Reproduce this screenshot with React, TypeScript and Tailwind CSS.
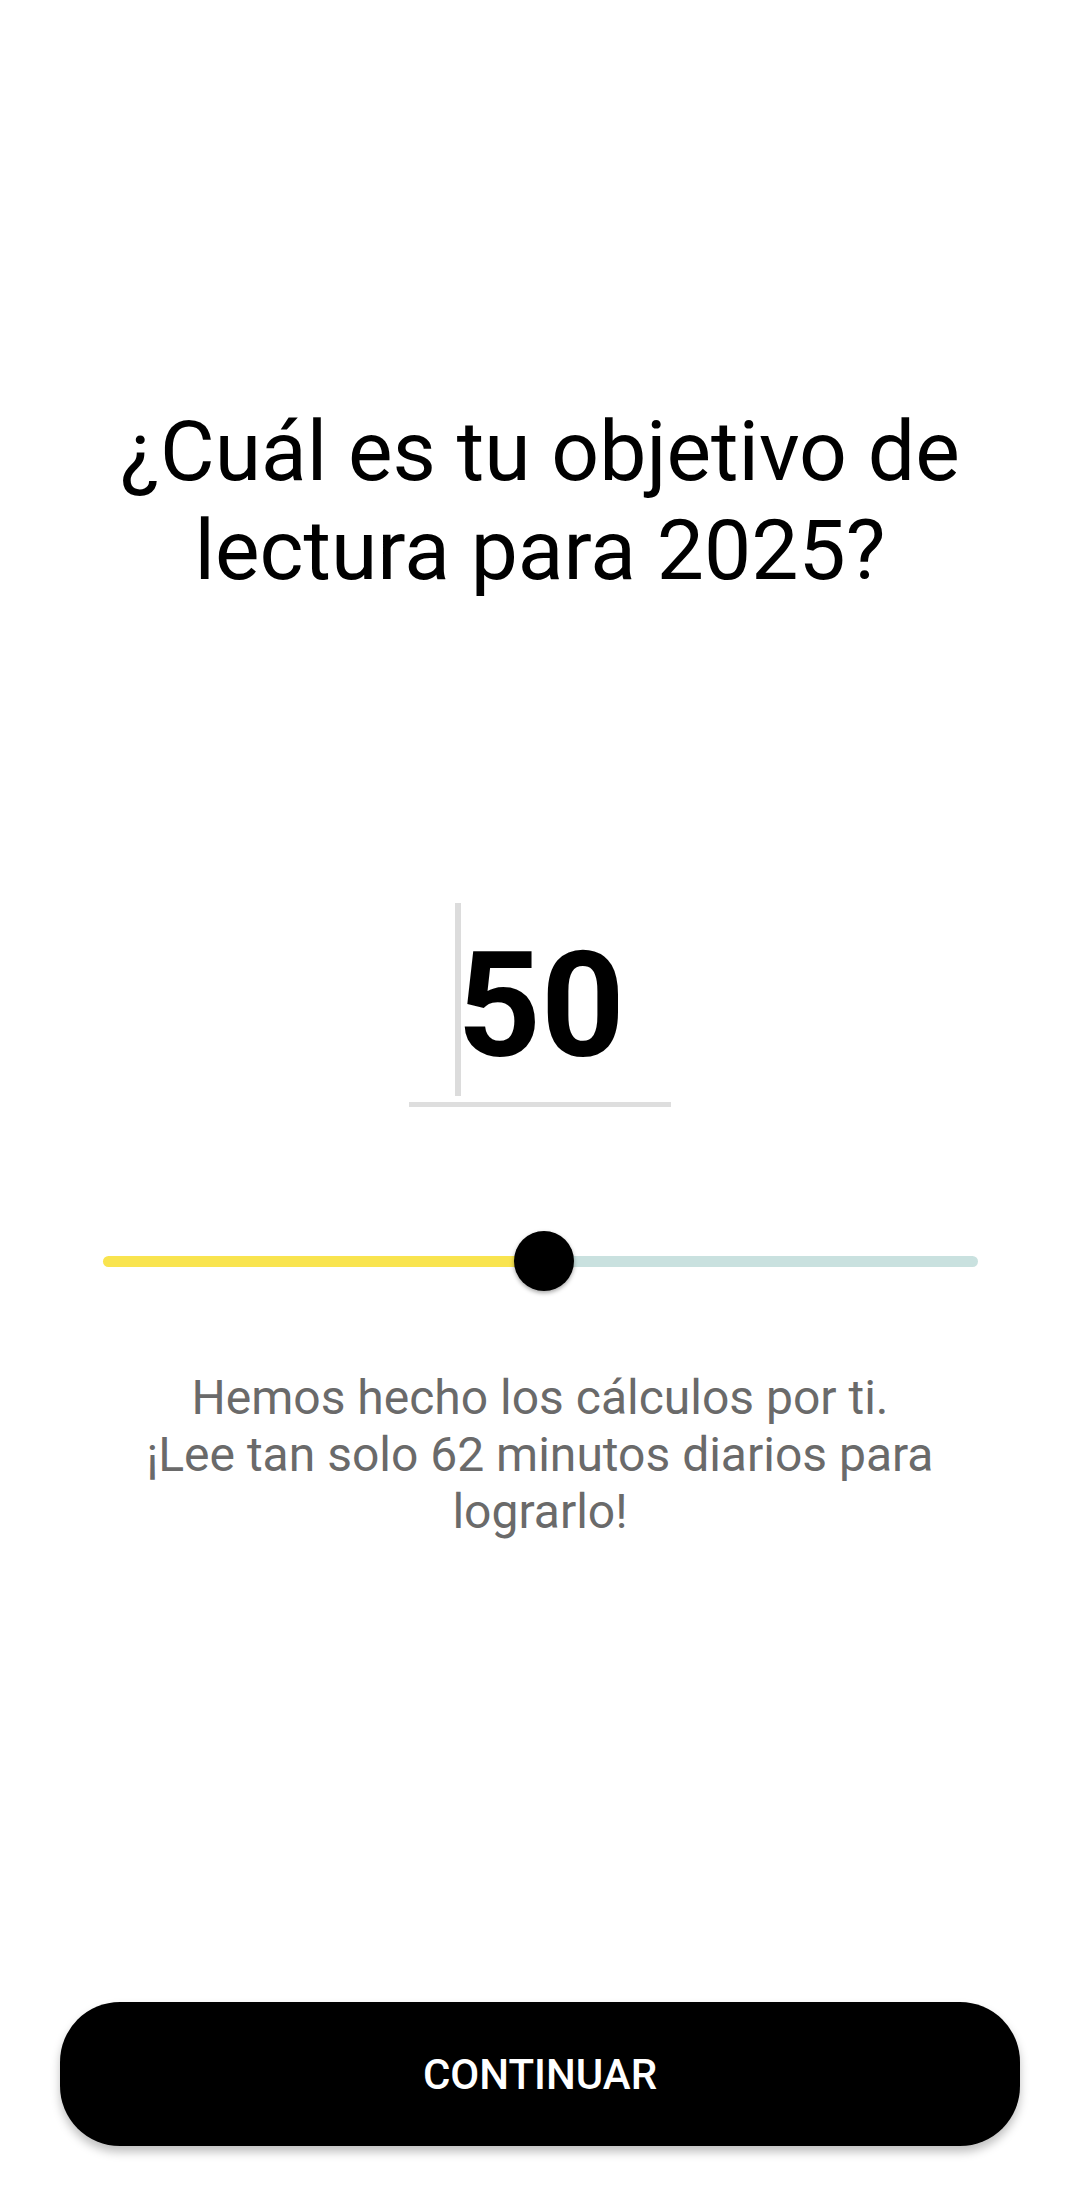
export default function App() {
  const value = 50;
  const percent = 50.5;

  return (
    <div className="flex min-h-[2206px] w-full flex-col items-center bg-white font-['Roboto',sans-serif] text-black">
      <h1 className="px-[60px] pt-[402px] text-center text-[84px] font-normal leading-[99px]">
        ¿Cuál es tu objetivo de lectura para 2025?
      </h1>

      <div className="mt-[303px] flex flex-col items-center">
        <div className="flex h-[193px] items-start">
          <div className="h-[193px] w-[6px] bg-[#dcdcdc]" />
          <span className="-ml-[4px] mt-[31px] text-[146px] font-bold leading-[146px]">{value}</span>
        </div>
        <div className="mt-[6px] h-[5px] w-[262px] bg-[#dedede]" />
      </div>

      <div className="mt-[124px] flex h-[60px] w-[875px] items-center">
        <div className="relative flex h-[11px] w-full">
          <div className="h-full rounded-l-full bg-[#f9e44f]" style={{ width: `${percent}%` }} />
          <div className="h-full flex-1 rounded-r-full bg-[#c9e1df]" />
          <div
            className="absolute top-1/2 h-[60px] w-[60px] -translate-x-1/2 -translate-y-1/2 rounded-full bg-black shadow-[0_2px_4px_rgba(0,0,0,0.35)]"
            style={{ left: `${percent}%` }}
          />
        </div>
      </div>

      <p className="mt-[78px] w-[875px] text-center text-[48px] leading-[57px] text-[#6a6a6a]">
        Hemos hecho los cálculos por ti.
        <br />
        ¡Lee tan solo 62 minutos diarios para lograrlo!
      </p>

      <div className="mt-auto w-full px-[60px] pb-[60px]">
        <button className="flex h-[144px] w-full items-center justify-center rounded-[60px] bg-black text-[42px] font-medium uppercase text-white shadow-[0_6px_10px_rgba(0,0,0,0.25)]">
          Continuar
        </button>
      </div>
    </div>
  );
}
